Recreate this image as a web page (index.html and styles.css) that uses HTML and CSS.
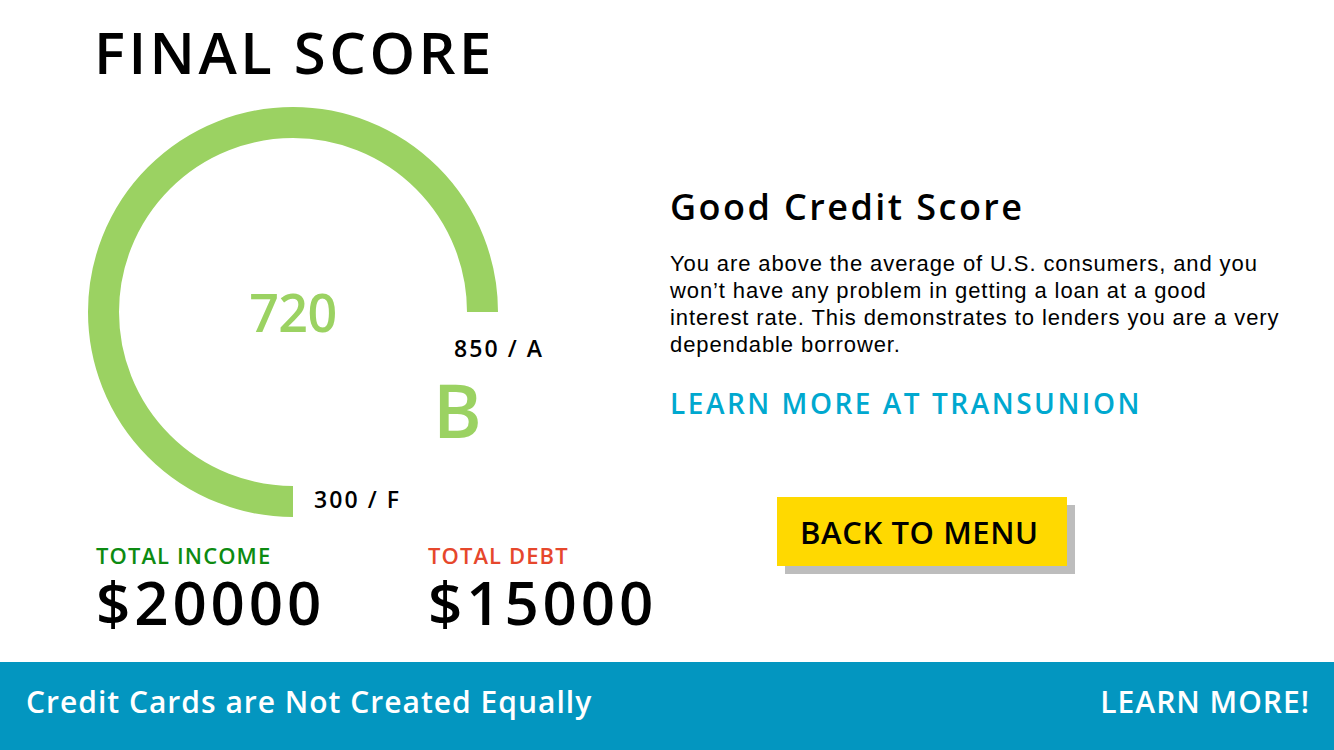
FILE: index.html
```html
<!DOCTYPE html>
<html lang="en">
<head>
<meta charset="utf-8">
<title>Final Score</title>
<link rel="stylesheet" href="styles.css">
</head>
<body>
<div class="page">
  <main class="main">
    <section class="left">
      <h1 class="title">FINAL SCORE</h1>
      <div class="gauge">
        <svg class="gauge-svg" width="410" height="410" viewBox="0 0 410 410">
          <path d="M 205 394.5 A 189.5 189.5 0 1 1 394.5 205" fill="none" stroke="#9bd262" stroke-width="31"/>
        </svg>
        <div class="score">720</div>
        <div class="mark mark-max">850 / A</div>
        <div class="grade">B</div>
        <div class="mark mark-min">300 / F</div>
      </div>
      <div class="totals">
        <div class="total">
          <div class="total-label income">TOTAL INCOME</div>
          <div class="total-value">$20000</div>
        </div>
        <div class="total">
          <div class="total-label debt">TOTAL DEBT</div>
          <div class="total-value">$15000</div>
        </div>
      </div>
    </section>
    <section class="right">
      <h2 class="heading">Good Credit Score</h2>
      <p class="desc">You are above the average of U.S. consumers, and you won’t have any problem in getting a loan at a good interest rate. This demonstrates to lenders you are a very dependable borrower.</p>
      <a class="link" href="#">LEARN MORE AT TRANSUNION</a>
      <button class="btn" type="button">BACK TO MENU</button>
    </section>
  </main>
  <footer class="bar">
    <span class="bar-text">Credit Cards are Not Created Equally</span>
    <span class="bar-link">LEARN MORE!</span>
  </footer>
</div>
</body>
</html>
```

FILE: styles.css
```css
* { box-sizing: border-box; }
html, body { margin: 0; padding: 0; background: #fff; }
body {
  font-family: "Open Sans", Lato, sans-serif;
  font-weight: 600;
  letter-spacing: 0.045em;
  color: #000;
}
.page {
  width: 1334px;
  height: 750px;
  display: flex;
  flex-direction: column;
  overflow: hidden;
}
.main {
  height: 662px;
  display: flex;
}
.left {
  width: 670px;
  flex: none;
  padding-top: 17px;
  display: flex;
  flex-direction: column;
}
.title {
  margin: 0 0 0 94px;
  font-size: 58px;
  line-height: 70px;
  font-weight: 600;
  letter-spacing: 0.06em;
}
.gauge {
  position: relative;
  width: 410px;
  height: 410px;
  margin: 20px 0 0 88px;
}
.gauge-svg { display: block; }
.score {
  position: absolute;
  left: 0;
  width: 410px;
  top: 174px;
  text-align: center;
  font-size: 52px;
  line-height: 62px;
  letter-spacing: -0.5px;
  color: #9bd262;
}
.mark {
  position: absolute;
  font-size: 23px;
  line-height: 28px;
  white-space: nowrap;
  letter-spacing: 0.09em;
}
.mark-max { left: 366px; top: 227px; }
.mark-min { left: 226px; top: 378px; }
.grade {
  position: absolute;
  left: 345px;
  top: 258px;
  font-size: 74px;
  line-height: 89px;
  letter-spacing: 0;
  color: #9bd262;
}
.totals {
  display: flex;
  margin: 26px 0 0 96px;
}
.total { flex: none; }
.total:first-child { width: 332px; }
.total-label {
  font-size: 22px;
  line-height: 24px;
  letter-spacing: 0.05em;
}
.income { color: #0d8b12; }
.debt { color: #e6472c; }
.total-value {
  margin-top: 0;
  font-size: 60px;
  line-height: 70px;
  letter-spacing: 0.065em;
}
.right {
  flex: 1;
  padding-top: 185px;
  display: flex;
  flex-direction: column;
  align-items: flex-start;
}
.heading {
  margin: 0;
  font-size: 36px;
  line-height: 43px;
  font-weight: 600;
  letter-spacing: 0.068em;
}
.desc {
  margin: 22px 0 0;
  width: 618px;
  font-family: "Liberation Sans", Arial, sans-serif;
  font-weight: 400;
  font-size: 22px;
  line-height: 27px;
  letter-spacing: 0.9px;
}
.link {
  margin-top: 28px;
  font-size: 28px;
  line-height: 34px;
  letter-spacing: 0.09em;
  color: #00a8cf;
  text-decoration: none;
}
.btn {
  margin: 77px 0 0 107px;
  width: 290px;
  height: 69px;
  border: 0;
  padding: 0 0 0 23px;
  background: #ffd900;
  box-shadow: 8px 8px 0 #bdbdbd;
  font-family: "Open Sans", Lato, sans-serif;
  font-size: 31px;
  font-weight: 600;
  letter-spacing: 0.6px;
  color: #000;
  text-align: left;
  cursor: pointer;
}
.bar {
  height: 88px;
  background: #0396c0;
  display: flex;
  align-items: center;
  justify-content: space-between;
  padding: 0 24px 8px 26px;
  color: #fff;
  font-size: 30px;
  letter-spacing: 1px;
}
.bar-text, .bar-link { line-height: 36px; }
```
